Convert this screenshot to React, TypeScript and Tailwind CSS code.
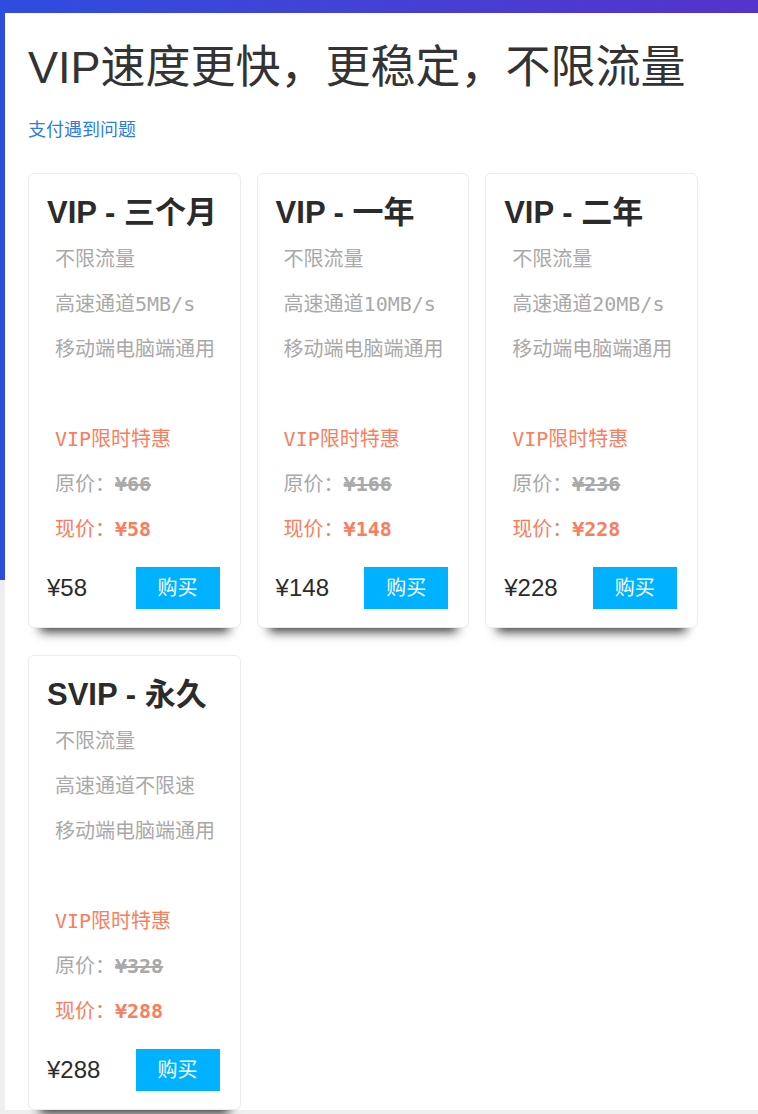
import React from "react";

const plans = [
  { name: "VIP - 三个月", speed: "5MB/s", was: "¥66", now: "¥58", price: "¥58" },
  { name: "VIP - 一年", speed: "10MB/s", was: "¥166", now: "¥148", price: "¥148" },
  { name: "VIP - 二年", speed: "20MB/s", was: "¥236", now: "¥228", price: "¥228" },
  { name: "SVIP - 永久", speed: "不限速", was: "¥328", now: "¥288", price: "¥288" },
];

const sans = "font-['Liberation_Sans','Noto_Sans_CJK_SC',sans-serif]";
const mono = "font-['DejaVu_Sans_Mono','Noto_Sans_CJK_SC',monospace]";

function PlanCard({ plan }: { plan: (typeof plans)[number] }) {
  return (
    <div className="w-[212.6px] rounded-md border border-[#ececec] bg-white shadow-[0_16px_10px_-12px_rgba(0,0,0,0.75)]">
      <div className={`pl-[18px] pt-[19px] text-[31px] font-bold leading-[40px] text-[#2b2b2b] ${sans}`}>{plan.name}</div>
      <ul className={`mt-[4px] pl-[26px] text-[20px] leading-[45px] text-[#a9a9a9] ${mono}`}>
        <li>不限流量</li>
        <li>高速通道{plan.speed}</li>
        <li>移动端电脑端通用</li>
        <li>&nbsp;</li>
        <li className="text-[#fb7d5d]">VIP限时特惠</li>
        <li>
          原价：<span className="font-bold line-through">{plan.was}</span>
        </li>
        <li className="text-[#fb7d5d]">
          现价：<span className="font-bold">{plan.now}</span>
        </li>
      </ul>
      <div className="mt-[15px] flex items-center justify-between pb-[18px] pl-[18px] pr-[20px]">
        <span className={`text-[24px] text-[#2b2b2b] ${sans}`}>{plan.price}</span>
        <button className={`h-[42px] w-[84px] bg-[#00b1ff] text-[20px] text-white ${sans}`}>购买</button>
      </div>
    </div>
  );
}

export default function App() {
  return (
    <div className="min-h-[1114px] bg-[#efefef] pb-[6px]">
      <div className="h-[13px] bg-gradient-to-r from-[#2d4de0] to-[#5333cb]" />
      <div className="flex">
        <div className="h-[567px] w-[5px] shrink-0 bg-[#2f4ce0]" />
        <main className="flex-1 bg-white pl-[23px] pt-[30px]">
          <h1 className={`text-[45px] font-normal leading-[50px] text-[#333] ${sans}`}>VIP速度更快，更稳定，不限流量</h1>
          <a className={`mt-[25px] block text-[18px] leading-[24px] text-[#2f7de1] ${sans}`}>支付遇到问题</a>
          <div className="mt-[31px] grid grid-cols-[repeat(3,212.6px)] gap-x-4 gap-y-[27px]">
            {plans.map((p) => (
              <PlanCard key={p.name} plan={p} />
            ))}
          </div>
        </main>
      </div>
    </div>
  );
}
